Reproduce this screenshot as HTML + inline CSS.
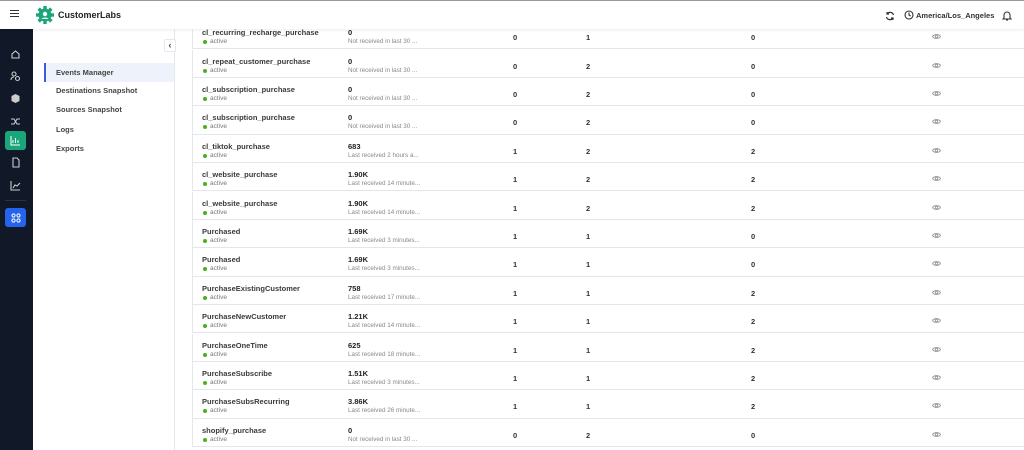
<!DOCTYPE html><html><head><style>
*{margin:0;padding:0;box-sizing:border-box}
body{width:1024px;height:450px;overflow:hidden;background:#fff;font-family:"Liberation Sans",sans-serif;position:relative;color:#222}
.top{position:absolute;left:0;top:0;width:1024px;height:29px;border-top:1px solid #999;background:#fff;box-shadow:0 1px 3px rgba(0,0,0,.08);z-index:5}
.side{position:absolute;left:0;top:29px;width:33px;height:421px;background:#111827}
.ic{position:absolute;left:5px;width:21px;height:19px;border-radius:3px;display:flex;align-items:center;justify-content:center}
.sub{position:absolute;left:33px;top:29px;width:142px;height:421px;border-right:1px solid #e5e7eb;background:#fff}
.sub div{position:absolute;left:12px;font-size:7.5px;font-weight:bold;color:#444}
.row{position:absolute;left:192px;width:832px;height:28.4px;border-left:1px solid #e5e7eb;border-bottom:1px solid #e3e6ec;font-size:7.5px}
.n{position:absolute;left:9px;top:7px;font-weight:bold;color:#3a3a3a}
.a{position:absolute;left:17px;top:17px;color:#777;font-size:6.5px}
.a:before{content:"";position:absolute;left:-7px;top:2px;width:4px;height:4px;border-radius:2px;background:#4caf1f}
.c{position:absolute;font-weight:bold;top:7px;color:#222}
.s{position:absolute;left:155px;top:17px;color:#888;font-size:6.3px}
.v{position:absolute;top:12px;font-weight:bold;color:#333}
.eye{position:absolute;left:739px;top:12px}
</style></head><body>
<div class="top">
<div style="position:absolute;left:10px;top:9px;width:9px;height:1.3px;background:#333;box-shadow:0 3px 0 #333,0 6px 0 #333"></div>
<svg style="position:absolute;left:36px;top:5px" width="18" height="18" viewBox="0 0 18 18"><g fill="#1aa67a"><circle cx="9" cy="9" r="6.5"/><rect x="7.3" y="0" width="3.4" height="18"/><rect x="0" y="7.3" width="18" height="3.4"/><rect x="7.3" y="0" width="3.4" height="18" transform="rotate(45 9 9)"/><rect x="7.3" y="0" width="3.4" height="18" transform="rotate(-45 9 9)"/></g><circle cx="9" cy="8" r="2.2" fill="#fff"/><path d="M5.5 13c1-2 6-2 7 0" fill="#fff"/></svg>
<div style="position:absolute;left:58px;top:9px;font-size:9px;font-weight:bold;color:#222">CustomerLabs</div>
<svg style="position:absolute;left:885px;top:10px" width="10" height="10" viewBox="0 0 10 10" fill="none" stroke="#333" stroke-width="1.2"><path d="M8.5 4A3.6 3.6 0 0 0 2 3M1.5 6A3.6 3.6 0 0 0 8 7"/><path d="M2 1v2h2M8 9V7H6"/></svg>
<svg style="position:absolute;left:904px;top:9px" width="10" height="10" viewBox="0 0 10 10" fill="none" stroke="#333" stroke-width="1.1"><circle cx="5" cy="5" r="4"/><path d="M5 2.5V5l1.7 1"/></svg>
<div style="position:absolute;left:916px;top:10px;font-size:7.5px;font-weight:bold;color:#333">America/Los_Angeles</div>
<svg style="position:absolute;left:1002px;top:9px" width="10" height="11" viewBox="0 0 10 11" fill="none" stroke="#333" stroke-width="1.1"><path d="M2 8V5a3 3 0 0 1 6 0v3l1 1H1z"/><path d="M4 10h2"/></svg>
</div>
<div class="side">
<svg class="ic" style="top:15px" viewBox="0 0 21 19" fill="none" stroke="#ccc" stroke-width="1.1"><path d="M7 10l3.5-3 3.5 3v4H7z"/></svg>
<svg class="ic" style="top:38px" viewBox="0 0 21 19" fill="none" stroke="#ccc" stroke-width="1.1"><circle cx="9" cy="7" r="2"/><circle cx="12.5" cy="11.5" r="2"/><path d="M6 13c0-2 1-3 3-3"/></svg>
<svg class="ic" style="top:60px" viewBox="0 0 21 19" fill="#ccc"><path d="M10.5 5l4 2v5l-4 2-4-2V7z"/></svg>
<svg class="ic" style="top:83px" viewBox="0 0 21 19" fill="none" stroke="#ccc" stroke-width="1.1"><path d="M6 7h3l3 5h3M6 12h3l3-5h3"/></svg>
<div class="ic" style="top:102px;background:#1aa67a"><svg width="11" height="11" viewBox="0 0 11 11" fill="none" stroke="#fff" stroke-width="1"><path d="M1 1v9h9M3 8V5M5.5 8V3M8 8V5"/></svg></div>
<svg class="ic" style="top:124px" viewBox="0 0 21 19" fill="none" stroke="#ccc" stroke-width="1.1"><path d="M8 5h4l2 2v7H8z"/></svg>
<svg class="ic" style="top:147px" viewBox="0 0 21 19" fill="none" stroke="#ccc" stroke-width="1.1"><path d="M6 5v9h9M8 12l2-3 2 1 3-3"/></svg>
<div style="position:absolute;left:5px;top:171px;width:21px;height:1px;background:#2a3344"></div>
<div class="ic" style="top:179px;background:#2563eb"><svg width="10" height="10" viewBox="0 0 10 10" fill="none" stroke="#fff" stroke-width="1"><circle cx="2.5" cy="2.5" r="1.6"/><circle cx="7.5" cy="2.5" r="1.6"/><circle cx="2.5" cy="7.5" r="1.6"/><circle cx="7.5" cy="7.5" r="1.6"/></svg></div>
</div>
<div class="sub">
<div style="left:131px;top:10px;width:12px;height:13px;border:1px solid #e5e7eb;border-radius:2px;background:#fff;font-size:9px;text-align:center;line-height:11px">‹</div>
<div style="left:11px;top:34px;width:130px;height:19px;background:#eef2fb;border-left:2px solid #3b5bdb;padding:5px 0 0 10px;font-size:7.5px">Events Manager</div>
<div style="left:23px;top:57px">Destinations Snapshot</div>
<div style="left:23px;top:76px">Sources Snapshot</div>
<div style="left:23px;top:96px">Logs</div>
<div style="left:23px;top:115px">Exports</div>
</div>
<div id="t"></div>
<script>
var d=[["cl_recurring_recharge_purchase","0","Not received in last 30 ...",0,1,0],["cl_repeat_customer_purchase","0","Not received in last 30 ...",0,2,0],["cl_subscription_purchase","0","Not received in last 30 ...",0,2,0],["cl_subscription_purchase","0","Not received in last 30 ...",0,2,0],["cl_tiktok_purchase","683","Last received 2 hours a...",1,2,2],["cl_website_purchase","1.90K","Last received 14 minute...",1,2,2],["cl_website_purchase","1.90K","Last received 14 minute...",1,2,2],["Purchased","1.69K","Last received 3 minutes...",1,1,0],["Purchased","1.69K","Last received 3 minutes...",1,1,0],["PurchaseExistingCustomer","758","Last received 17 minute...",1,1,2],["PurchaseNewCustomer","1.21K","Last received 14 minute...",1,1,2],["PurchaseOneTime","625","Last received 18 minute...",1,1,2],["PurchaseSubscribe","1.51K","Last received 3 minutes...",1,1,2],["PurchaseSubsRecurring","3.86K","Last received 26 minute...",1,1,2],["shopify_purchase","0","Not received in last 30 ...",0,2,0]];
var h="";d.forEach(function(r,i){var t=21.1+28.4*i;h+='<div class="row" style="top:'+t+'px"><div class="n">'+r[0]+'</div><div class="a">active</div><div class="c" style="left:155px">'+r[1]+'</div><div class="s">'+r[2]+'</div><div class="v" style="left:320px">'+r[3]+'</div><div class="v" style="left:393px">'+r[4]+'</div><div class="v" style="left:558px">'+r[5]+'</div><svg class="eye" width="9" height="7" viewBox="0 0 9 7" fill="none" stroke="#999" stroke-width="0.9"><path d="M.5 3.5C2 1 7 1 8.5 3.5 7 6 2 6 .5 3.5z"/><circle cx="4.5" cy="3.5" r="1.2"/></svg></div>'});
document.getElementById("t").innerHTML=h;
</script>
</body></html>
